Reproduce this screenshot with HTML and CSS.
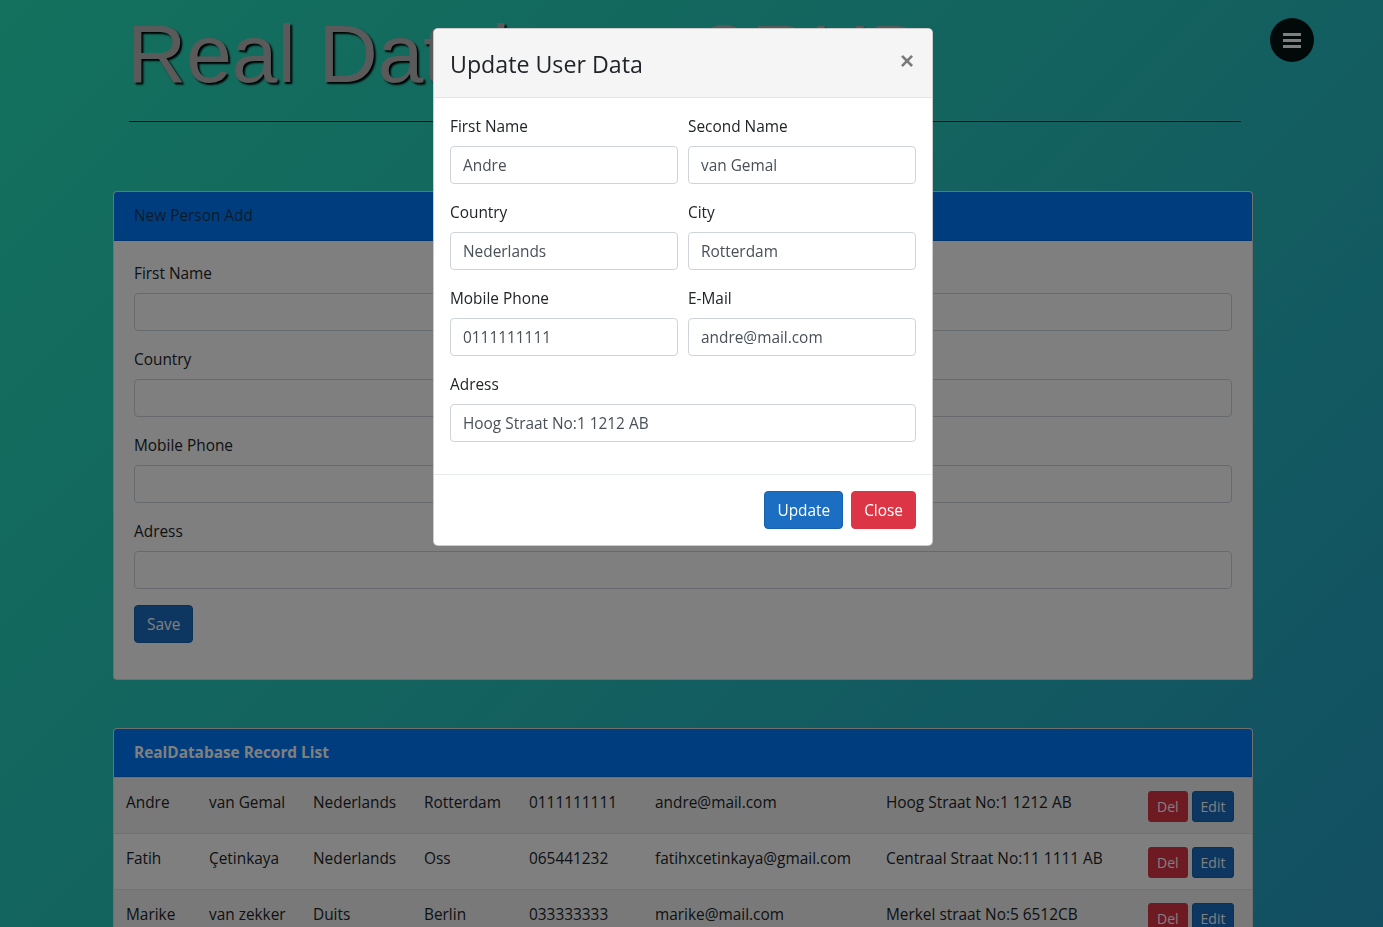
FILE: index.html
```html
<!DOCTYPE html>
<html lang="en">
<head>
<meta charset="utf-8">
<title>Real Database CRUD</title>
<link rel="stylesheet" href="styles.css">
</head>
<body>
<button class="menu-btn" type="button" aria-label="Menu">
  <span class="bar"></span><span class="bar"></span><span class="bar"></span>
</button>

<div class="container">
  <h1 class="title">Real Database CRUD</h1>
  <hr class="rule">

  <div class="card add-card">
    <div class="card-header add-header">New Person Add</div>
    <div class="card-body">
      <div class="form-row">
        <div class="form-group"><label>First Name</label><input class="form-control" type="text"></div>
        <div class="form-group"><label>Second Name</label><input class="form-control" type="text"></div>
      </div>
      <div class="form-row">
        <div class="form-group"><label>Country</label><input class="form-control" type="text"></div>
        <div class="form-group"><label>City</label><input class="form-control" type="text"></div>
      </div>
      <div class="form-row">
        <div class="form-group"><label>Mobile Phone</label><input class="form-control" type="text"></div>
        <div class="form-group"><label>E-Mail</label><input class="form-control" type="text"></div>
      </div>
      <div class="form-group"><label>Adress</label><input class="form-control" type="text"></div>
      <div class="form-group"><button class="btn btn-primary" type="button">Save</button></div>
    </div>
  </div>

  <div class="card list-card">
    <div class="card-header list-header">RealDatabase Record List</div>
    <table class="records">
      <colgroup>
        <col class="c-first"><col class="c-second"><col class="c-country"><col class="c-city">
        <col class="c-phone"><col class="c-mail"><col class="c-addr"><col class="c-act">
      </colgroup>
      <tbody>
        <tr class="odd">
          <td>Andre</td><td>van Gemal</td><td>Nederlands</td><td>Rotterdam</td><td>0111111111</td><td>andre@mail.com</td><td>Hoog Straat No:1 1212 AB</td>
          <td class="actions"><button class="btn btn-sm btn-danger" type="button">Del</button><button class="btn btn-sm btn-primary" type="button">Edit</button></td>
        </tr>
        <tr>
          <td>Fatih</td><td>Çetinkaya</td><td>Nederlands</td><td>Oss</td><td>065441232</td><td>fatihxcetinkaya@gmail.com</td><td>Centraal Straat No:11 1111 AB</td>
          <td class="actions"><button class="btn btn-sm btn-danger" type="button">Del</button><button class="btn btn-sm btn-primary" type="button">Edit</button></td>
        </tr>
        <tr class="odd">
          <td>Marike</td><td>van zekker</td><td>Duits</td><td>Berlin</td><td>033333333</td><td>marike@mail.com</td><td>Merkel straat No:5 6512CB</td>
          <td class="actions"><button class="btn btn-sm btn-danger" type="button">Del</button><button class="btn btn-sm btn-primary" type="button">Edit</button></td>
        </tr>
      </tbody>
    </table>
  </div>
</div>

<div class="backdrop"></div>

<div class="modal">
  <div class="modal-dialog">
    <div class="modal-content">
      <div class="modal-header">
        <h5 class="modal-title">Update User Data</h5>
        <button class="close" type="button" aria-label="Close">×</button>
      </div>
      <div class="modal-body">
        <div class="form-row modal-row">
          <div class="form-group"><label>First Name</label><input class="form-control" type="text" value="Andre"></div>
          <div class="form-group"><label>Second Name</label><input class="form-control" type="text" value="van Gemal"></div>
        </div>
        <div class="form-row modal-row">
          <div class="form-group"><label>Country</label><input class="form-control" type="text" value="Nederlands"></div>
          <div class="form-group"><label>City</label><input class="form-control" type="text" value="Rotterdam"></div>
        </div>
        <div class="form-row modal-row">
          <div class="form-group"><label>Mobile Phone</label><input class="form-control" type="text" value="0111111111"></div>
          <div class="form-group"><label>E-Mail</label><input class="form-control" type="text" value="andre@mail.com"></div>
        </div>
        <div class="form-group"><label>Adress</label><input class="form-control" type="text" value="Hoog Straat No:1 1212 AB"></div>
      </div>
      <div class="modal-footer">
        <button class="btn btn-primary" type="button">Update</button>
        <button class="btn btn-danger" type="button">Close</button>
      </div>
    </div>
  </div>
</div>
</body>
</html>
```

FILE: styles.css
```css
* { box-sizing: border-box; }

html, body { height: 100%; }

body {
  margin: 0;
  padding-right: 17px;
  overflow: hidden;
  font-family: "Open Sans", "Noto Sans", sans-serif;
  font-size: 15.4px;
  line-height: 24px;
  color: #212529;
  background: linear-gradient(135deg, #27e2bb 0%, #27c4bf 50%, #249fc6 100%);
}

.menu-btn {
  position: absolute;
  top: 18px;
  left: 1270px;
  width: 44px;
  height: 44px;
  border: 0;
  border-radius: 50%;
  background: rgba(0, 0, 0, 0.9);
  display: flex;
  flex-direction: column;
  align-items: center;
  justify-content: center;
  gap: 3px;
  padding: 0;
}
.menu-btn .bar {
  display: block;
  width: 18px;
  height: 3px;
  background: #fff;
}

.container {
  width: 1170px;
  margin: 0 auto;
  padding: 0 15px;
}

.title {
  margin: 0 0 0 14px;
  padding-top: 5px;
  font: 400 82px/98px "Liberation Sans", Arial, sans-serif;
  color: #b4b4b4;
  text-shadow: 2px 2px 2px #000;
  white-space: nowrap;
}

.rule {
  margin: 17px 12px 0 16px;
  height: 2px;
  border: 0;
  border-top: 1px solid rgba(255, 255, 255, 0.12);
  border-bottom: 1px solid rgba(0, 0, 0, 0.75);
}

.card {
  background: #fff;
  border: 1px solid rgba(0, 0, 0, 0.125);
  border-radius: 4px;
  overflow: hidden;
}
.add-card { margin-top: 69px; }
.list-card { margin-top: 48px; }

.card-header {
  background: #007bff;
  padding: 12px 20px;
  border-bottom: 1px solid rgba(0, 0, 0, 0.125);
}
.add-header { color: #1f3756; }
.list-header { color: #fff; font-weight: 700; padding-bottom: 11px; }

.card-body { padding: 20px; }

.form-row {
  display: grid;
  grid-template-columns: 1fr 1fr;
  column-gap: 30px;
}
.modal-row { column-gap: 10px; }

.form-group { margin-bottom: 16px; }
.form-group label {
  display: block;
  padding-top: 1px;
  margin-bottom: 7px;
}

.form-control {
  display: block;
  width: 100%;
  height: 38px;
  padding: 6px 12px;
  font: inherit;
  color: #495057;
  background: #fff;
  border: 1px solid #ced4da;
  border-radius: 4px;
}

.btn {
  display: inline-block;
  font: inherit;
  line-height: 24px;
  padding: 7px 12px 5px;
  border: 1px solid transparent;
  border-radius: 4px;
  color: #fff;
}
.btn-primary { background: #1b6ec2; border-color: #1861ac; }
.btn-danger { background: #dc3545; border-color: #dc3545; }
.btn-sm {
  font-size: 14px;
  line-height: 21px;
  padding: 4px 8px;
  border-radius: 3px;
}

.records {
  width: 100%;
  border-collapse: collapse;
  table-layout: fixed;
}
.records td {
  padding: 13px 12px 11px;
  vertical-align: top;
  border-top: 1px solid #dee2e6;
  white-space: nowrap;
}
.records tr.odd td { background: rgba(0, 0, 0, 0.05); }
.records .actions { padding-top: 13px; padding-bottom: 11px; }
.records .actions .btn { vertical-align: top; }
.records .actions .btn + .btn { margin-left: 4px; }

.c-first { width: 83px; }
.c-second { width: 104px; }
.c-country { width: 111px; }
.c-city { width: 105px; }
.c-phone { width: 126px; }
.c-mail { width: 231px; }
.c-addr { width: 262px; }
.c-act { width: 116px; }

.backdrop {
  position: fixed;
  inset: 0;
  background: rgba(0, 0, 0, 0.5);
}

.modal {
  position: fixed;
  inset: 0;
  padding-right: 17px;
}
.modal-dialog {
  width: 500px;
  margin: 28px auto;
}
.modal-content {
  background: #fff;
  border: 1px solid rgba(0, 0, 0, 0.2);
  border-radius: 5px;
  overflow: hidden;
}
.modal-header {
  display: flex;
  align-items: flex-start;
  background: #f5f5f5;
  padding: 16px;
  border-bottom: 1px solid #e5e5e5;
}
.modal-title {
  margin: 0;
  padding-top: 3px;
  font-size: 23.2px;
  font-weight: 500;
  line-height: 33px;
  color: #212529;
}
.close {
  margin: 4px 2px 0 auto;
  padding: 0;
  border: 0;
  background: transparent;
  font: 700 24px/24px "Liberation Sans", Arial, sans-serif;
  color: #000;
  opacity: 0.5;
}
.modal-body { padding: 16px; }
.modal-footer {
  display: flex;
  justify-content: flex-end;
  gap: 8px;
  padding: 16px;
  border-top: 1px solid #e9ecef;
}
```
